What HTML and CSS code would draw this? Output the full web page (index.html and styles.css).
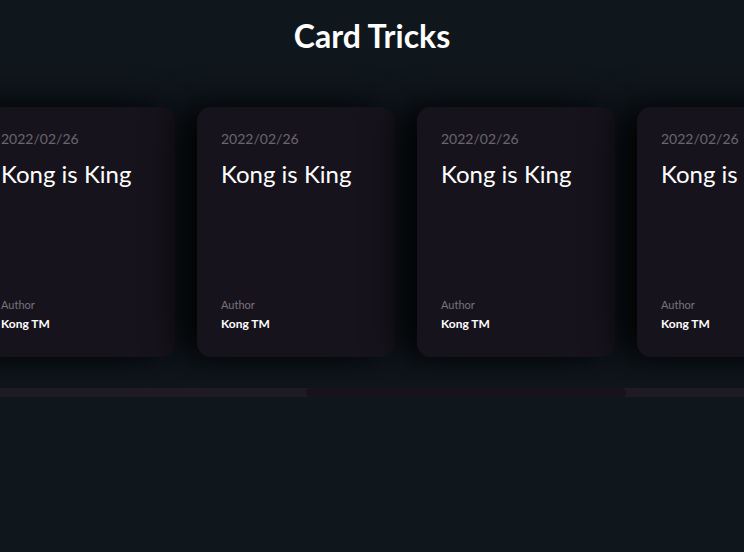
FILE: index.html
```
<!DOCTYPE html>
<html lang="en">
<head>
<meta charset="utf-8">
<title>Card Tricks</title>
<link rel="stylesheet" href="styles.css">
</head>
<body>
<h1 class="title">Card Tricks</h1>
<section class="card-list">
  <article class="card"><div class="card-date">2022/02/26</div><h2 class="card-title">Kong is King</h2><div class="card-author"><div class="author-label">Author</div><div class="author-name">Kong TM</div></div></article>
  <article class="card"><div class="card-date">2022/02/26</div><h2 class="card-title">Kong is King</h2><div class="card-author"><div class="author-label">Author</div><div class="author-name">Kong TM</div></div></article>
  <article class="card"><div class="card-date">2022/02/26</div><h2 class="card-title">Kong is King</h2><div class="card-author"><div class="author-label">Author</div><div class="author-name">Kong TM</div></div></article>
  <article class="card"><div class="card-date">2022/02/26</div><h2 class="card-title">Kong is King</h2><div class="card-author"><div class="author-label">Author</div><div class="author-name">Kong TM</div></div></article>
  <article class="card"><div class="card-date">2022/02/26</div><h2 class="card-title">Kong is King</h2><div class="card-author"><div class="author-label">Author</div><div class="author-name">Kong TM</div></div></article>
  <article class="card"><div class="card-date">2022/02/26</div><h2 class="card-title">Kong is King</h2><div class="card-author"><div class="author-label">Author</div><div class="author-name">Kong TM</div></div></article>
  <article class="card"><div class="card-date">2022/02/26</div><h2 class="card-title">Kong is King</h2><div class="card-author"><div class="author-label">Author</div><div class="author-name">Kong TM</div></div></article>
</section>
<div class="scrollbar"><div class="scroll-thumb"></div></div>
<script src="script.js"></script>
</body>
</html>
```
FILE: styles.css
```
* { box-sizing: border-box; }
html, body {
  margin: 0;
  background: #0f161c;
  font-family: Lato, "Open Sans", sans-serif;
  color: #fff;
}
.title {
  margin: 0;
  padding-top: 16px;
  font-size: 32px;
  line-height: 40px;
  font-weight: 700;
  text-align: center;
}
.card-list {
  display: flex;
  gap: 22px;
  padding: 51px 184px 31px 28px;
  overflow-x: scroll;
  overflow-y: hidden;
  scrollbar-width: none;
}
.card-list::-webkit-scrollbar { display: none; }
.scrollbar {
  height: 9px;
  background: #1f1b25;
  display: flex;
}
.scroll-thumb {
  height: 9px;
  background: #18121c;
  border-radius: 9px;
  margin-left: 306px;
  width: 320px;
}
.card {
  flex: 0 0 198px;
  height: 250px;
  padding: 24px 24px 25px;
  border-radius: 14px;
  background: #17131c;
  box-shadow: -16px 0 36px #000;
  display: flex;
  flex-direction: column;
}
.card-date {
  font-size: 14px;
  line-height: 16px;
  color: #6a6670;
}
.card-title {
  margin: 12px 0 0;
  font-size: 24px;
  line-height: 30px;
  font-weight: 400;
}
.card-author { margin-top: auto; }
.author-label {
  font-size: 11px;
  line-height: 14px;
  color: #77737c;
}
.author-name {
  margin-top: 4px;
  font-size: 12px;
  line-height: 16px;
  font-weight: 700;
}
```
FILE: script.js
```
var list = document.querySelector('.card-list');
list.scrollLeft = 711;
var thumb = document.querySelector('.scroll-thumb');
var track = document.querySelector('.scrollbar').clientWidth;
thumb.style.width = (list.clientWidth / list.scrollWidth * track) + 'px';
thumb.style.marginLeft = (list.scrollLeft / list.scrollWidth * track) + 'px';
```
